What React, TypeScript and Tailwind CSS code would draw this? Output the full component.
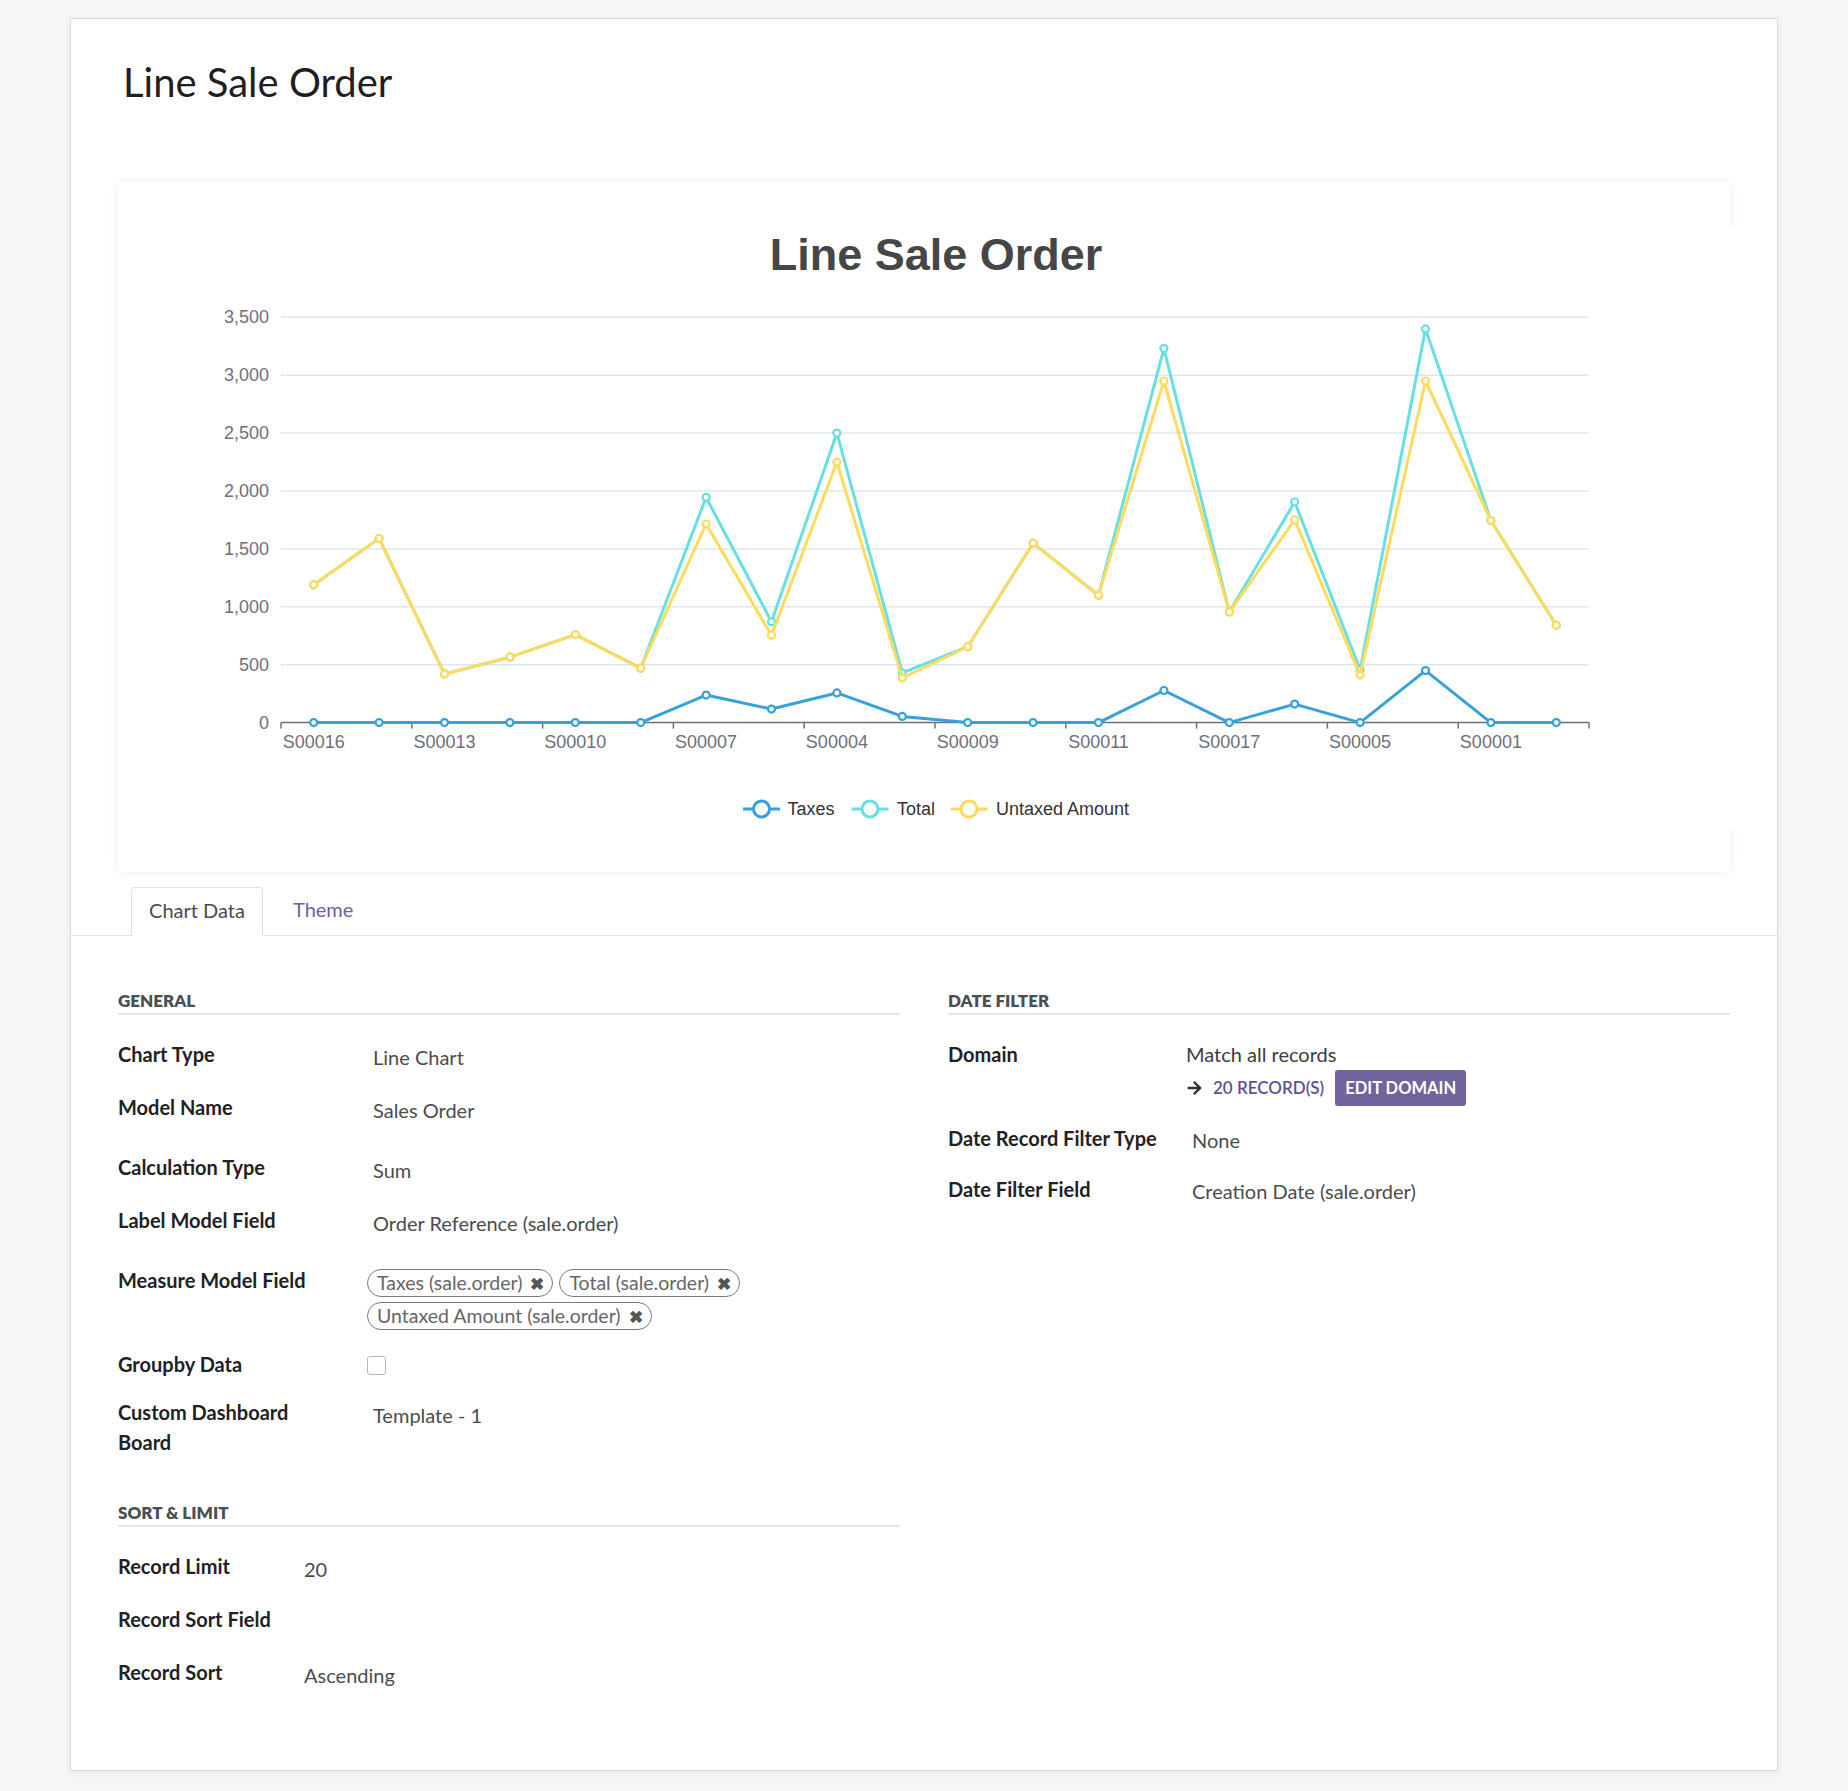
import React from "react";

const untaxed = [1190, 1590, 420, 565, 760, 470, 1715, 755, 2250, 385, 655, 1550, 1100, 2950, 955, 1750, 410, 2950, 1745, 840];
const taxes = [0, 0, 0, 0, 0, 0, 238, 117, 256, 53, 0, 0, 0, 277, 0, 160, 0, 449, 0, 0];
const total = [1190, 1590, 420, 565, 760, 470, 1945, 870, 2500, 430, 655, 1550, 1100, 3230, 955, 1905, 455, 3400, 1745, 840];
const xLabels = ["S00016", "S00013", "S00010", "S00007", "S00004", "S00009", "S00011", "S00017", "S00005", "S00001"];

const X0 = 163;
const X1 = 1471;
const BAND = (X1 - X0) / 20;
const px = (i: number) => X0 + BAND * (i + 0.5);
const py = (v: number) => 495.6 - v * 0.1158;

const series = [
  { name: "Taxes", color: "#37a2da", data: taxes },
  { name: "Total", color: "#67e0e3", data: total },
  { name: "Untaxed Amount", color: "#ffdb5c", data: untaxed },
];

function Chart() {
  const font = "'Liberation Sans', Arial, sans-serif";
  const legend = [
    { name: "Taxes", color: "#37a2da", cx: 643.5, tx: 669.5 },
    { name: "Total", color: "#67e0e3", cx: 752, tx: 779 },
    { name: "Untaxed Amount", color: "#ffdb5c", cx: 851, tx: 878 },
  ];
  return (
    <svg width={1636} height={603} className="block bg-white" style={{ fontFamily: font }}>
      <text x={818} y={42.5} textAnchor="middle" fontSize={45} fontWeight={700} fill="#464646">
        Line Sale Order
      </text>
      {[0, 500, 1000, 1500, 2000, 2500, 3000, 3500].map((v) => (
        <g key={v}>
          {v !== 0 && <line x1={X0} x2={X1} y1={py(v)} y2={py(v)} stroke="#e0e6f1" strokeWidth={1.5} />}
          <text x={151} y={py(v)} textAnchor="end" dominantBaseline="central" fontSize={18} fill="#6e7079">
            {v.toLocaleString("en-US")}
          </text>
        </g>
      ))}
      <line x1={X0} x2={X1} y1={py(0)} y2={py(0)} stroke="#6e7079" strokeWidth={1.5} />
      {Array.from({ length: 11 }).map((_, k) => (
        <line key={k} x1={X0 + k * BAND * 2} x2={X0 + k * BAND * 2} y1={py(0)} y2={py(0) + 6} stroke="#6e7079" strokeWidth={1.5} />
      ))}
      {xLabels.map((l, j) => (
        <text key={l} x={px(j * 2)} y={520.5} textAnchor="middle" fontSize={18} fill="#6e7079">
          {l}
        </text>
      ))}
      {series.map((s) => (
        <g key={s.name}>
          <polyline
            points={s.data.map((v, i) => `${px(i)},${py(v)}`).join(" ")}
            fill="none"
            stroke={s.color}
            strokeWidth={3}
            strokeLinejoin="round"
          />
          {s.data.map((v, i) => (
            <circle key={i} cx={px(i)} cy={py(v)} r={3.5} fill="#fff" stroke={s.color} strokeWidth={2.2} />
          ))}
        </g>
      ))}
      {legend.map((l) => (
        <g key={l.name}>
          <line x1={l.cx - 18.5} x2={l.cx + 18.5} y1={582} y2={582} stroke={l.color} strokeWidth={3} />
          <circle cx={l.cx} cy={582} r={8} fill="#fff" stroke={l.color} strokeWidth={3} />
          <text x={l.tx} y={582} dominantBaseline="central" fontSize={18} fill="#333">
            {l.name}
          </text>
        </g>
      ))}
    </svg>
  );
}

function SectionHeader({ children }: { children: React.ReactNode }) {
  return (
    <div className="border-b-2 border-[#e4e5e7] text-[17px] leading-[24px] font-extrabold uppercase text-[#4a4f55]">
      {children}
    </div>
  );
}

function Row({
  label,
  labelW,
  h,
  children,
  vOffset = "pt-[3px]",
}: {
  label: React.ReactNode;
  labelW: string;
  h: string;
  children?: React.ReactNode;
  vOffset?: string;
}) {
  return (
    <div className={`flex items-start ${h}`}>
      <div className={`${labelW} shrink-0 text-[20px] leading-[30px] font-bold text-[#1f2225]`}>{label}</div>
      <div className={`flex-1 text-[20px] leading-[30px] text-[#4c4c4c] ${vOffset}`}>{children}</div>
    </div>
  );
}

function Tag({ children }: { children: React.ReactNode }) {
  return (
    <div className="flex h-[28px] items-center rounded-full border-[1.5px] border-[#7a7a7a] pl-[9px] pr-[8px] text-[19.5px] text-[#666]">
      <span>{children}</span>
      <span className="ml-[8px] text-[17px] font-bold leading-none text-[#555]">✖</span>
    </div>
  );
}

function FaArrowRight() {
  return (
    <svg width="17" height="16" viewBox="0 0 448 512" className="block">
      <path
        fill="#333"
        d="M190.5 66.9l22.2-22.2c9.4-9.4 24.6-9.4 33.9 0L441 239c9.4 9.4 9.4 24.6 0 33.9L246.6 467.3c-9.4 9.4-24.6 9.4-33.9 0l-22.2-22.2c-9.5-9.5-9.3-25 .4-34.3L311.4 296H24c-13.3 0-24-10.7-24-24v-32c0-13.3 10.7-24 24-24h287.4L190.9 101.2c-9.8-9.3-10-24.8-.4-34.3z"
      />
    </svg>
  );
}

export default function App() {
  return (
    <div
      className="min-h-[1791px] bg-[#f5f6f8] pt-[18px]"
      style={{ fontFamily: "Lato, 'Open Sans', sans-serif" }}
    >
      <div className="ml-[70px] h-[1753px] w-[1708px] border border-[#d8dbe0] bg-white shadow-[0_2px_8px_rgba(0,0,0,0.06)]">
        <h1 className="ml-[52px] mt-[39px] text-[40px] leading-[48px] font-normal text-[#1f1f1f]">Line Sale Order</h1>

        <div className="ml-[47px] mt-[76px] h-[690px] w-[1612px] rounded-[4px] bg-white pt-[45px] shadow-[0_0_10px_rgba(0,0,0,0.08)]">
          <Chart />
        </div>

        <div className="mt-[15px] flex border-b border-[#dee2e6] pl-[60px]">
          <div className="-mb-px flex h-[49px] w-[132px] items-center justify-center rounded-t-[4px] border border-b-0 border-[#dee2e6] bg-white pb-[4px] text-[20px] text-[#4c4c4c]">
            Chart Data
          </div>
          <div className="flex h-[48px] items-center pb-[4px] pl-[30px] text-[20px] text-[#6f60a0]">Theme</div>
        </div>

        <div className="ml-[47px] mt-[53px] grid w-[1612px] grid-cols-2 gap-x-[48px]">
          <div>
            <SectionHeader>General</SectionHeader>
            <div className="mt-[24px]">
              <Row label="Chart Type" labelW="w-[255px]" h="h-[53px]">Line Chart</Row>
              <Row label="Model Name" labelW="w-[255px]" h="h-[60px]">Sales Order</Row>
              <Row label="Calculation Type" labelW="w-[255px]" h="h-[53px]">Sum</Row>
              <Row label="Label Model Field" labelW="w-[255px]" h="h-[60px]">Order Reference (sale.order)</Row>
              <Row label="Measure Model Field" labelW="w-[255px]" h="h-[84px]" vOffset="pt-[4px]">
                <div className="-ml-[6px] flex flex-col gap-[5px]">
                  <div className="flex gap-[6px]">
                    <Tag>Taxes (sale.order)</Tag>
                    <Tag>Total (sale.order)</Tag>
                  </div>
                  <div className="flex">
                    <Tag>Untaxed Amount (sale.order)</Tag>
                  </div>
                </div>
              </Row>
              <Row label="Groupby Data" labelW="w-[255px]" h="h-[48px]" vOffset="pt-[7px]">
                <div className="-ml-[6px] h-[19px] w-[19px] rounded-[3px] border border-[#b5b8bc] bg-white" />
              </Row>
              <Row
                label={
                  <>
                    Custom Dashboard
                    <br />
                    Board
                  </>
                }
                labelW="w-[255px]"
                h="h-[60px]"
              >
                Template - 1
              </Row>
            </div>
            <div className="mt-[44px]">
              <SectionHeader>Sort &amp; Limit</SectionHeader>
            </div>
            <div className="mt-[24px]">
              <Row label="Record Limit" labelW="w-[186px]" h="h-[53px]">20</Row>
              <Row label="Record Sort Field" labelW="w-[186px]" h="h-[53px]" />
              <Row label="Record Sort" labelW="w-[186px]" h="h-[53px]">Ascending</Row>
            </div>
          </div>

          <div>
            <SectionHeader>Date Filter</SectionHeader>
            <div className="mt-[24px]">
              <Row label="Domain" labelW="w-[238px]" h="h-[84px]" vOffset="pt-0">
                <div className="text-[#3d3d3d]">Match all records</div>
                <div className="mt-[1px] flex h-[36px] items-center">
                  <FaArrowRight />
                  <span className="ml-[10px] text-[17px] font-semibold uppercase text-[#5f5195]">20 Record(s)</span>
                  <button className="ml-[11px] flex h-[36px] w-[131px] items-center justify-center rounded-[3px] bg-[#71639e] text-[16.5px] font-bold uppercase text-white">
                    Edit Domain
                  </button>
                </div>
              </Row>
              <Row label="Date Record Filter Type" labelW="w-[244px]" h="h-[51px]" vOffset="pt-[2px]">
                None
              </Row>
              <Row label="Date Filter Field" labelW="w-[244px]" h="h-[51px]" vOffset="pt-[2px]">
                Creation Date (sale.order)
              </Row>
            </div>
          </div>
        </div>
      </div>
    </div>
  );
}
